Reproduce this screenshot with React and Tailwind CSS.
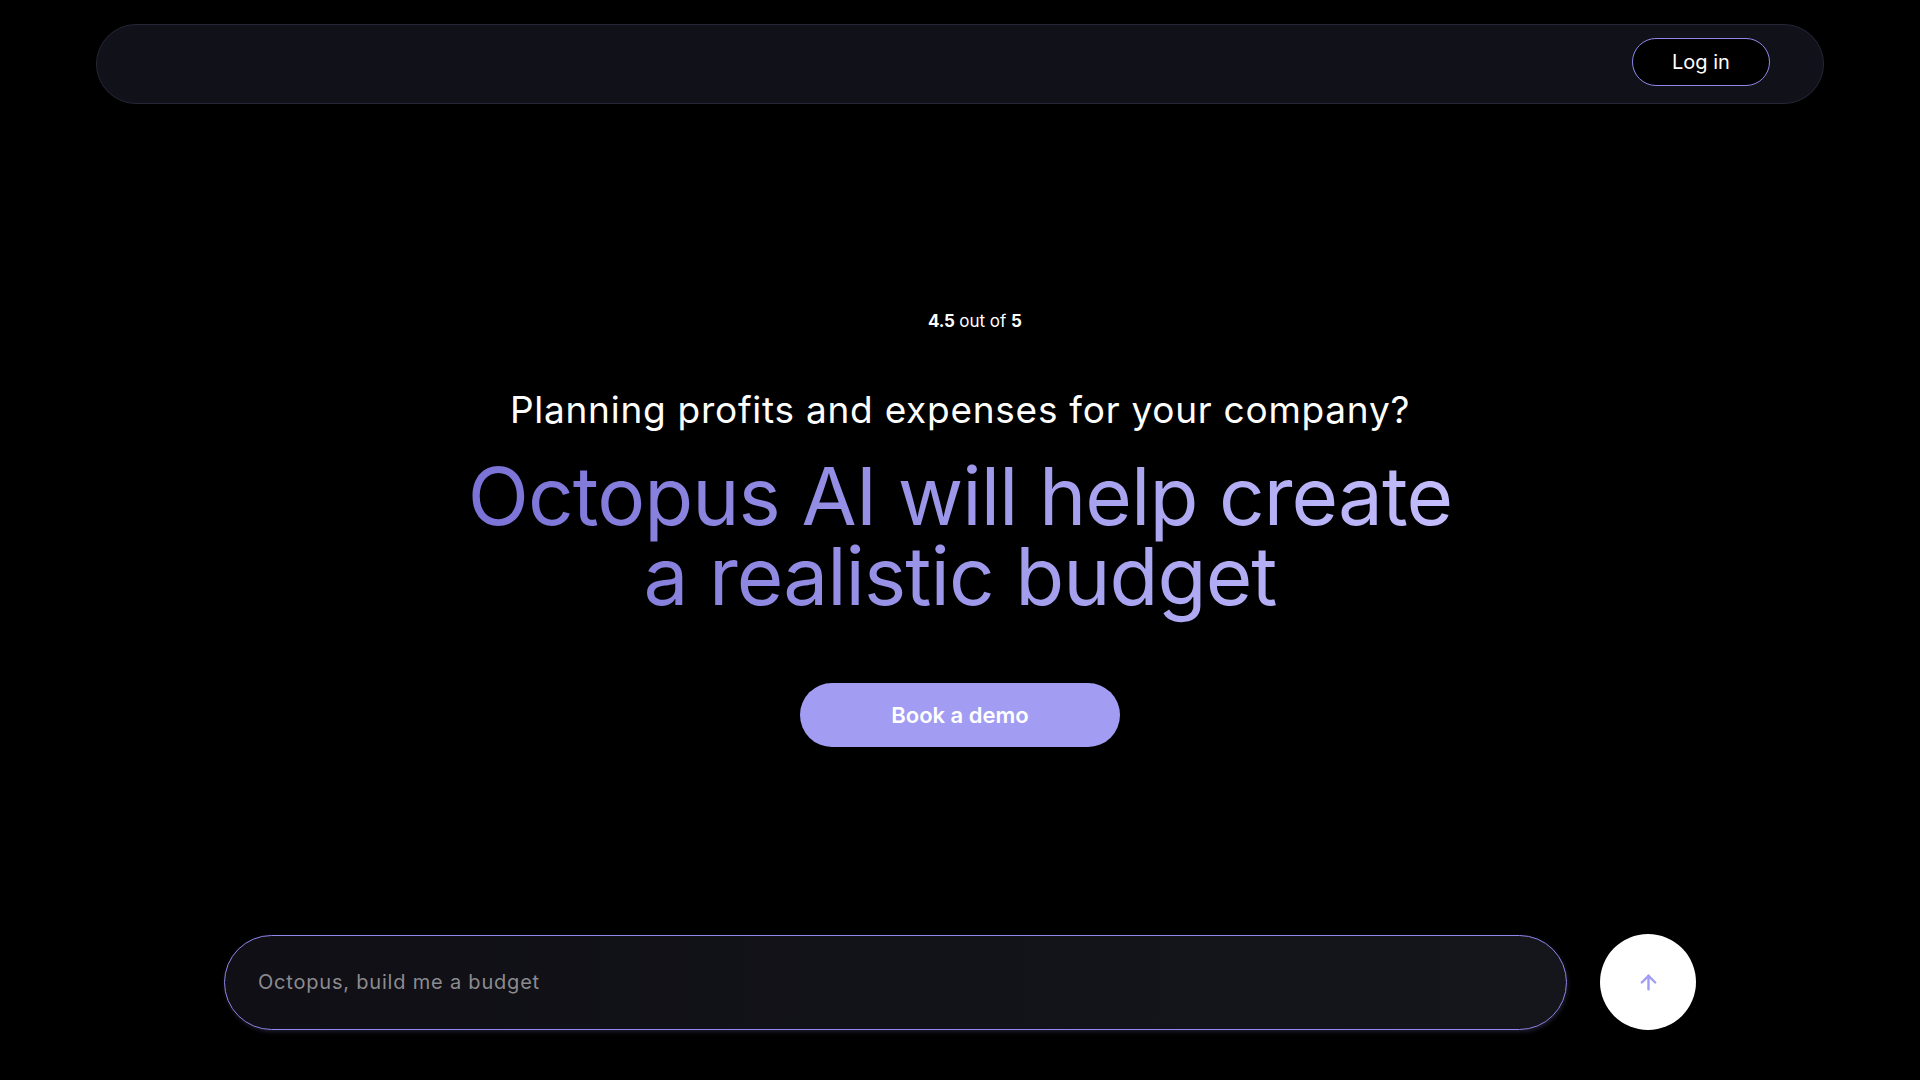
import React from "react";
import { ArrowUp } from "lucide-react";

export default function App() {
  return (
    <div className="min-h-screen w-full bg-black flex flex-col items-center font-['Inter',_sans-serif]">
      <header className="mt-6 w-[1728px] h-[80px] rounded-full bg-[#11111a] border border-[#262636] flex items-center justify-end pr-[53px]">
        <button className="w-[138px] h-[48px] -mt-[4px] rounded-full border border-[#8f88ea] bg-black text-white text-[20px] leading-none">
          Log in
        </button>
      </header>

      <main className="flex flex-col items-center">
        <div className="mt-[205px] flex items-center gap-2 text-white text-[17px] leading-6">
          <span className="w-[22px] h-4" />
          <span>
            <span className="font-bold tracking-[-0.02em]">4.5</span> out of{" "}
            <span className="font-bold">5</span>
          </span>
        </div>

        <h2 className="mt-[55px] text-white text-[37px] leading-[44px] tracking-[0.02em] font-normal">
          Planning profits and expenses for your company?
        </h2>

        <h1 className="mt-[24px] pb-3 text-center text-[80px] leading-[80px] tracking-[-0.012em] font-normal bg-linear-to-r from-[#7a72d6] to-[#c3bdfc] bg-clip-text text-transparent">
          <span className="block">Octopus AI will help create</span>
          <span className="block">a realistic budget</span>
        </h1>

        <button className="mt-[55px] w-[320px] h-[64px] rounded-full bg-[#a29df3] text-white text-[22px] font-semibold">
          Book a demo
        </button>
      </main>

      <div className="mt-auto mb-[50px] flex items-center gap-[33px]">
        <div className="w-[1343px] h-[95px] rounded-full border-[1.5px] border-[#9088ec] bg-linear-to-r from-[#0f0f15] to-[#15151c] flex items-center pl-[33px] shadow-[1px_2px_4px_rgba(60,55,90,0.5)]">
          <span className="text-[20px] text-[#8b8b90] tracking-[0.04em]">
            Octopus, build me a budget
          </span>
        </div>
        <button className="w-[96px] h-[96px] rounded-full bg-white flex items-center justify-center">
          <ArrowUp size={23} strokeWidth={2.5} color="#a29df3" />
        </button>
      </div>
    </div>
  );
}
